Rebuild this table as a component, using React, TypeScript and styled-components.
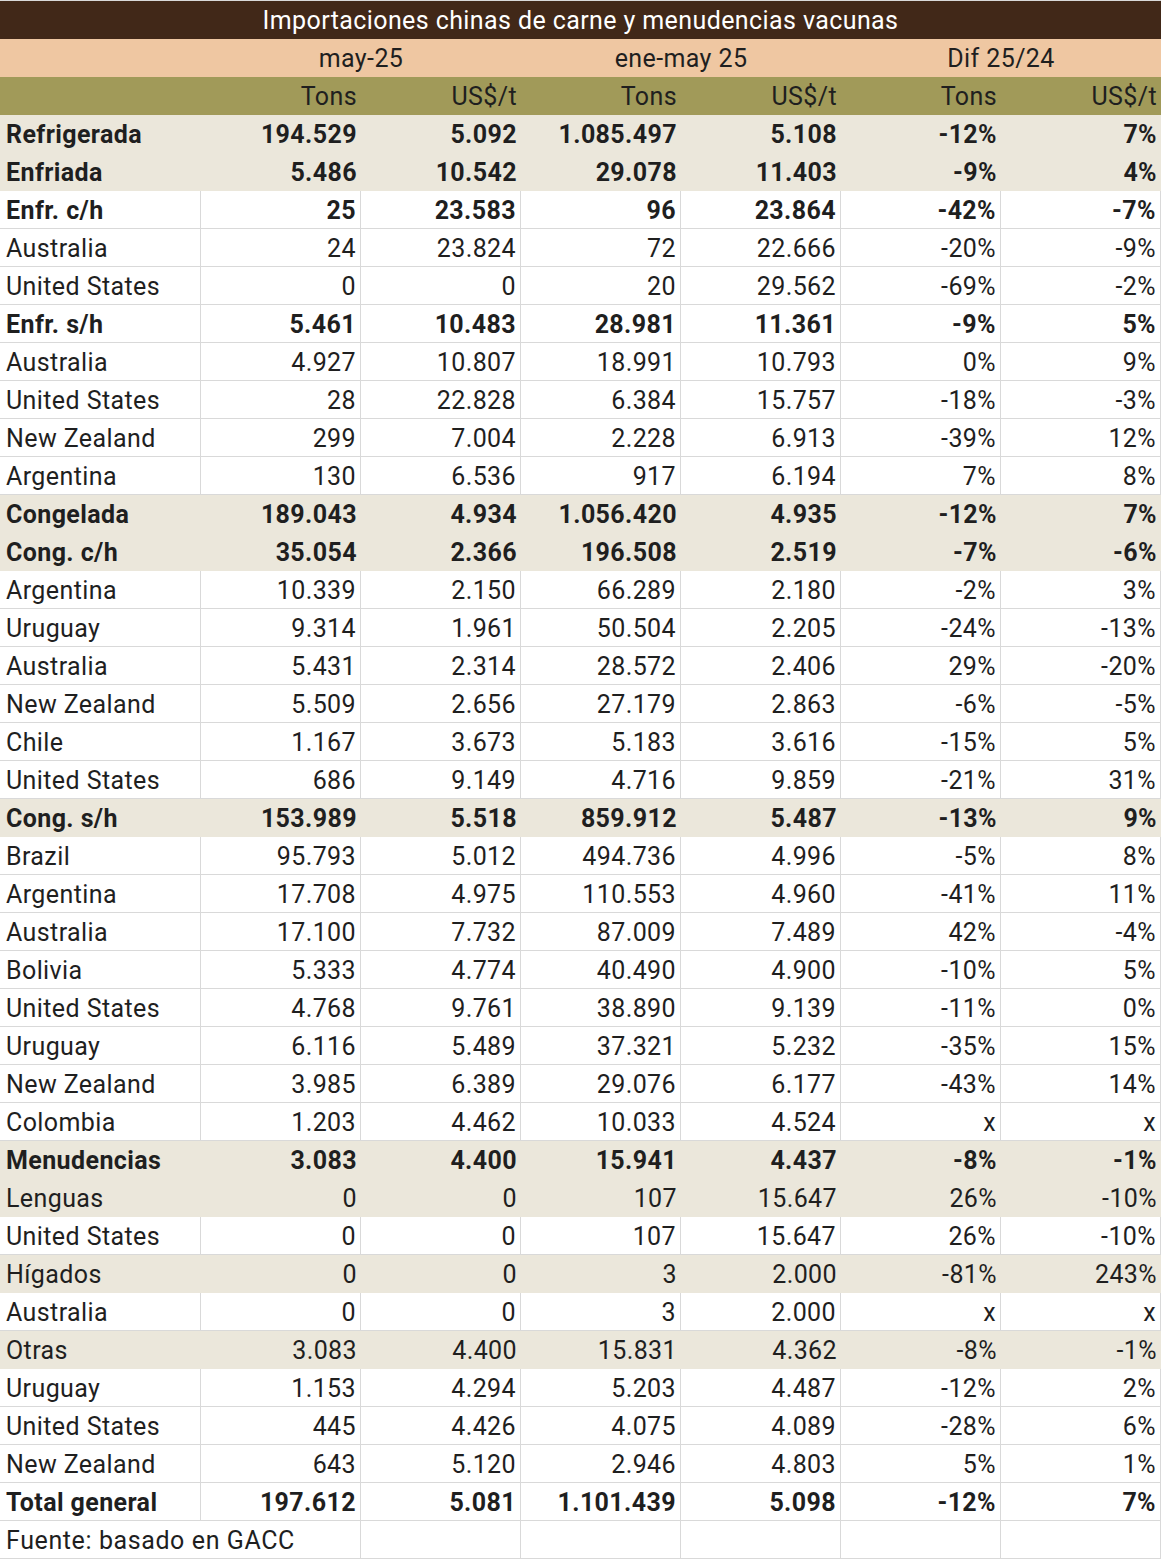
import React from "react";
import styled, { createGlobalStyle, css } from "styled-components";

const Global = createGlobalStyle`
  html, body { margin: 0; padding: 0; background: #ffffff; }
  body { font-family: Roboto, "Liberation Sans", sans-serif; }
`;

type Kind = "shade" | "white" | "total" | "note";

const Sheet = styled.div`
  width: 1161px;
  border-top: 1px solid #d9d9d9;
  display: flex;
  flex-direction: column;
  color: #1f1f1f;
  font-size: 25px;
  letter-spacing: 0.4px;
`;

const COLS = "201px repeat(6, 160px)";

const TitleRow = styled.div`
  height: 38px;
  background: #412818;
  color: #ffffff;
  display: flex;
  align-items: center;
  justify-content: center;
`;

const PeriodRow = styled.div`
  height: 38px;
  background: #efc7a2;
  display: grid;
  grid-template-columns: 201px repeat(3, 320px);
  align-items: center;
`;

const Period = styled.div`
  text-align: center;
`;

const UnitRow = styled.div`
  height: 38px;
  background: #a19a59;
  display: grid;
  grid-template-columns: ${COLS};
  align-items: center;
`;

const Unit = styled.div`
  text-align: right;
  padding-right: 4px;
`;

const Row = styled.div<{ $kind: Kind; $bold?: boolean }>`
  height: 38px;
  box-sizing: border-box;
  display: grid;
  grid-template-columns: ${COLS};
  font-weight: ${(p) => (p.$bold ? 700 : 400)};
  ${(p) =>
    p.$kind === "shade"
      ? css`
          background: #ebe7db;
        `
      : css`
          background: #ffffff;
          border-bottom: 1px solid #d9d9d9;
        `}
`;

const Cell = styled.div<{ $kind: Kind; $label?: boolean }>`
  display: flex;
  align-items: center;
  justify-content: ${(p) => (p.$label ? "flex-start" : "flex-end")};
  padding: ${(p) => (p.$label ? "1px 0 0 6px" : "1px 4px 0 0")};
  white-space: nowrap;
  ${(p) =>
    p.$kind !== "shade" &&
    css`
      border-right: 1px solid #d9d9d9;
    `}
`;

const NoteCell = styled.div`
  display: flex;
  align-items: center;
  padding: 1px 0 0 6px;
  white-space: nowrap;
  border-right: 1px solid #d9d9d9;
  letter-spacing: 0.6px;
`;

type Line = [string, Kind, boolean, ...string[]];

const data: Line[] = [
  ["Refrigerada", "shade", true, "194.529", "5.092", "1.085.497", "5.108", "-12%", "7%"],
  ["Enfriada", "shade", true, "5.486", "10.542", "29.078", "11.403", "-9%", "4%"],
  ["Enfr. c/h", "white", true, "25", "23.583", "96", "23.864", "-42%", "-7%"],
  ["Australia", "white", false, "24", "23.824", "72", "22.666", "-20%", "-9%"],
  ["United States", "white", false, "0", "0", "20", "29.562", "-69%", "-2%"],
  ["Enfr. s/h", "white", true, "5.461", "10.483", "28.981", "11.361", "-9%", "5%"],
  ["Australia", "white", false, "4.927", "10.807", "18.991", "10.793", "0%", "9%"],
  ["United States", "white", false, "28", "22.828", "6.384", "15.757", "-18%", "-3%"],
  ["New Zealand", "white", false, "299", "7.004", "2.228", "6.913", "-39%", "12%"],
  ["Argentina", "white", false, "130", "6.536", "917", "6.194", "7%", "8%"],
  ["Congelada", "shade", true, "189.043", "4.934", "1.056.420", "4.935", "-12%", "7%"],
  ["Cong. c/h", "shade", true, "35.054", "2.366", "196.508", "2.519", "-7%", "-6%"],
  ["Argentina", "white", false, "10.339", "2.150", "66.289", "2.180", "-2%", "3%"],
  ["Uruguay", "white", false, "9.314", "1.961", "50.504", "2.205", "-24%", "-13%"],
  ["Australia", "white", false, "5.431", "2.314", "28.572", "2.406", "29%", "-20%"],
  ["New Zealand", "white", false, "5.509", "2.656", "27.179", "2.863", "-6%", "-5%"],
  ["Chile", "white", false, "1.167", "3.673", "5.183", "3.616", "-15%", "5%"],
  ["United States", "white", false, "686", "9.149", "4.716", "9.859", "-21%", "31%"],
  ["Cong. s/h", "shade", true, "153.989", "5.518", "859.912", "5.487", "-13%", "9%"],
  ["Brazil", "white", false, "95.793", "5.012", "494.736", "4.996", "-5%", "8%"],
  ["Argentina", "white", false, "17.708", "4.975", "110.553", "4.960", "-41%", "11%"],
  ["Australia", "white", false, "17.100", "7.732", "87.009", "7.489", "42%", "-4%"],
  ["Bolivia", "white", false, "5.333", "4.774", "40.490", "4.900", "-10%", "5%"],
  ["United States", "white", false, "4.768", "9.761", "38.890", "9.139", "-11%", "0%"],
  ["Uruguay", "white", false, "6.116", "5.489", "37.321", "5.232", "-35%", "15%"],
  ["New Zealand", "white", false, "3.985", "6.389", "29.076", "6.177", "-43%", "14%"],
  ["Colombia", "white", false, "1.203", "4.462", "10.033", "4.524", "x", "x"],
  ["Menudencias", "shade", true, "3.083", "4.400", "15.941", "4.437", "-8%", "-1%"],
  ["Lenguas", "shade", false, "0", "0", "107", "15.647", "26%", "-10%"],
  ["United States", "white", false, "0", "0", "107", "15.647", "26%", "-10%"],
  ["Hígados", "shade", false, "0", "0", "3", "2.000", "-81%", "243%"],
  ["Australia", "white", false, "0", "0", "3", "2.000", "x", "x"],
  ["Otras", "shade", false, "3.083", "4.400", "15.831", "4.362", "-8%", "-1%"],
  ["Uruguay", "white", false, "1.153", "4.294", "5.203", "4.487", "-12%", "2%"],
  ["United States", "white", false, "445", "4.426", "4.075", "4.089", "-28%", "6%"],
  ["New Zealand", "white", false, "643", "5.120", "2.946", "4.803", "5%", "1%"],
  ["Total general", "total", true, "197.612", "5.081", "1.101.439", "5.098", "-12%", "7%"],
  ["Fuente: basado en GACC", "note", false, "", "", "", "", "", ""],
];

export default function App() {
  return (
    <>
      <Global />
      <Sheet>
        <TitleRow>Importaciones chinas de carne y menudencias vacunas</TitleRow>
        <PeriodRow>
          <div />
          <Period>may-25</Period>
          <Period>ene-may 25</Period>
          <Period>Dif 25/24</Period>
        </PeriodRow>
        <UnitRow>
          <div />
          <Unit>Tons</Unit>
          <Unit>US$/t</Unit>
          <Unit>Tons</Unit>
          <Unit>US$/t</Unit>
          <Unit>Tons</Unit>
          <Unit>US$/t</Unit>
        </UnitRow>
        {data.map(([label, kind, bold, ...vals], i) => (
          <Row key={i} $kind={kind} $bold={bold}>
            {kind === "note" ? (
              <NoteCell style={{ gridColumn: "1 / span 2" }}>{label}</NoteCell>
            ) : (
              <Cell $kind={kind} $label>
                {label}
              </Cell>
            )}
            {(kind === "note" ? vals.slice(1) : vals).map((v, j) => (
              <Cell key={j} $kind={kind}>
                {v}
              </Cell>
            ))}
          </Row>
        ))}
      </Sheet>
    </>
  );
}
